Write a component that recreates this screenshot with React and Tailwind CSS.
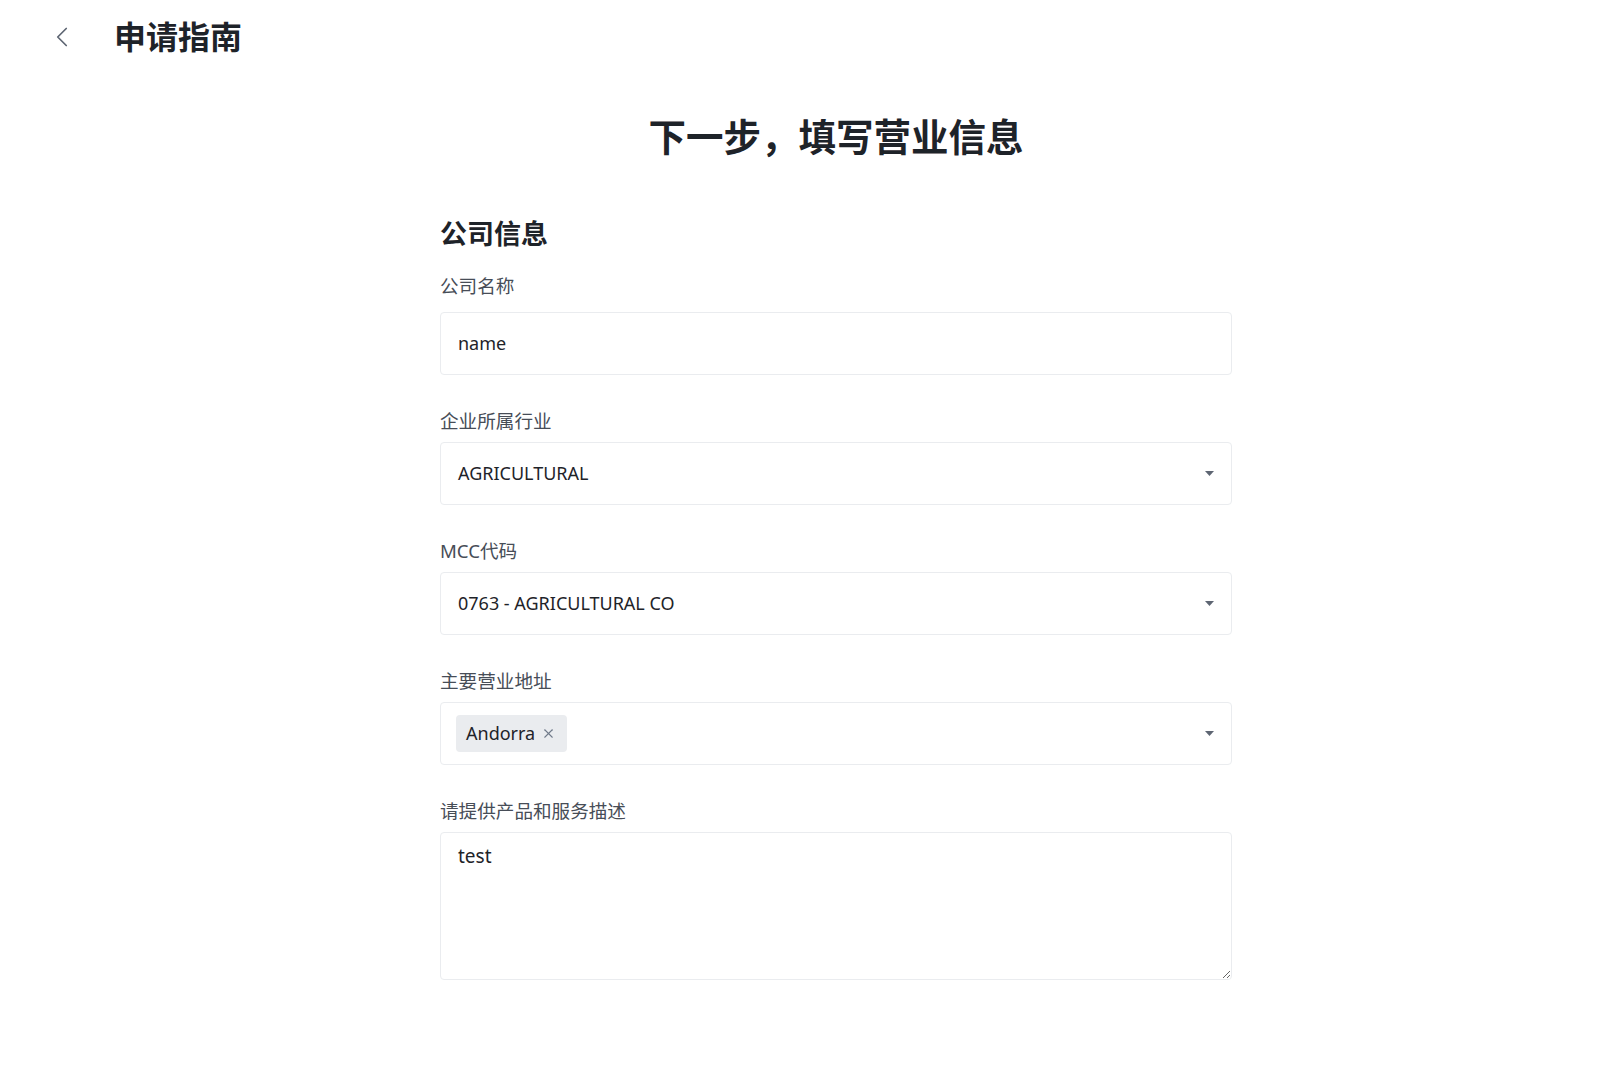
import { ChevronLeft, X } from 'lucide-react'

const fontStack = "font-['Noto_Sans','Noto_Sans_CJK_SC',sans-serif]"

function Caret() {
  return (
    <svg width="9" height="5" viewBox="0 0 9 5" className="shrink-0">
      <path d="M0 0h9L4.5 5z" fill="#5e6673" />
    </svg>
  )
}

function Field({ label, first, children }) {
  return (
    <div className={first ? 'mt-[22px]' : 'mt-[34px]'}>
      <label className={`block text-[18.6px] leading-[24px] text-[#474d57] ${first ? 'mb-[14px]' : 'mb-[9px]'}`}>{label}</label>
      {children}
    </div>
  )
}

function Box({ children, className = '' }) {
  return (
    <div className={`h-[63px] border border-[#eaecef] rounded-[4px] flex items-center ${className}`}>
      {children}
    </div>
  )
}

export default function App() {
  return (
    <div className={`min-h-screen bg-white text-[#1e2329] ${fontStack}`}>
      <header className="h-[74px] flex items-center pl-[45px]">
        <ChevronLeft size={34} strokeWidth={1.2} className="text-[#5e6673]" />
        <h1 className="ml-[35px] text-[32px] font-bold leading-none">申请指南</h1>
      </header>

      <main className="pl-[72px] pb-20">
        <div className="w-[792px] mx-auto">
          <h2 className="mt-[39px] text-center text-[37.5px] leading-[48px] font-bold">下一步，填写营业信息</h2>

          <h3 className="mt-[55px] text-[27px] leading-[36px] font-semibold">公司信息</h3>

          <Field label="公司名称" first>
            <Box className="px-[17px]">
              <span className="text-[18px]">name</span>
            </Box>
          </Field>

          <Field label="企业所属行业">
            <Box className="pl-[17px] pr-[17px] justify-between">
              <span className="text-[18px]">AGRICULTURAL</span>
              <Caret />
            </Box>
          </Field>

          <Field label="MCC代码">
            <Box className="pl-[17px] pr-[17px] justify-between">
              <span className="text-[18px]">0763 - AGRICULTURAL CO</span>
              <Caret />
            </Box>
          </Field>

          <Field label="主要营业地址">
            <Box className="pl-[15px] pr-[17px] justify-between">
              <span className="h-[37px] rounded-[4px] bg-[#eaecef] pl-[10px] pr-[11px] flex items-center gap-[6px]">
                <span className="text-[18px]">Andorra</span>
                <X size={15} strokeWidth={1.7} className="text-[#707a8a]" />
              </span>
              <Caret />
            </Box>
          </Field>

          <Field label="请提供产品和服务描述">
            <textarea
              defaultValue="test"
              className="block w-full h-[148px] border border-[#eaecef] rounded-[4px] px-[17px] pt-[10px] text-[19px] leading-[26px] text-[#1e2329] outline-none resize-y"
            />
          </Field>
        </div>
      </main>
    </div>
  )
}
